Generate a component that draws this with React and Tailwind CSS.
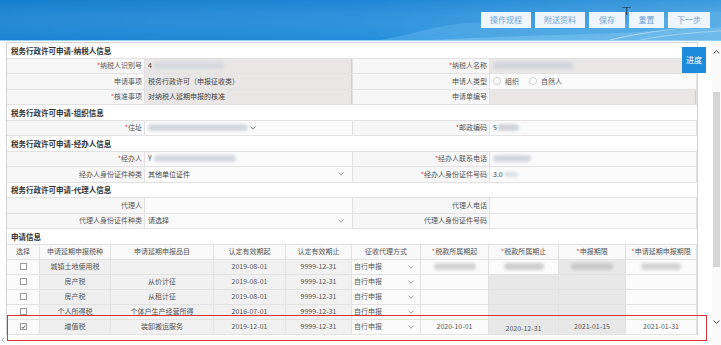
import React from "react";

function Chev({ className = "", color = "#888" }) {
  return (
    <svg width="6" height="4" viewBox="0 0 6 4" className={className}>
      <path d="M0.6 0.6L3 3.2L5.4 0.6" fill="none" stroke={color} strokeWidth="0.8" />
    </svg>
  );
}

function Blob({ w, h = 7, c = "bg-[#c9ced6]", ml = "" }) {
  return <span className={`inline-block rounded-full blur-[1.5px] ${c} ${ml}`} style={{ width: w, height: h }} />;
}

function Req() {
  return <span className="text-[#e23b3b]">*</span>;
}

function Label({ children, req, w }) {
  return (
    <div className={`${w} shrink-0 flex items-center justify-end pr-[2px] bg-[#f7f7f7] border-r border-[#e2e2e2] text-[#555]`}>
      {req && <Req />}
      {children}
    </div>
  );
}

function Val({ children, ro, w, between }) {
  return (
    <div
      className={`${w} flex items-center pl-[3px] pr-[8px] border-r border-[#e2e2e2] text-[#444] ${
        ro ? "bg-[#e9e6e6] shadow-[inset_-1px_0_0_#cfcfcf]" : "bg-[#fbfbfb]"
      } ${between ? "justify-between" : ""}`}
    >
      {children}
    </div>
  );
}

function FormRow({ l1, r1, v1, ro1, b1, l2, r2, v2, ro2, b2 }) {
  return (
    <div className="flex h-[15.5px] border-b border-[#e2e2e2]">
      <Label w="w-[138px]" req={r1}>{l1}</Label>
      <Val w="w-[208px]" ro={ro1} between={b1}>{v1}</Val>
      <Label w="w-[137px]" req={r2}>{l2}</Label>
      <Val w="flex-1" ro={ro2} between={b2}>{v2}</Val>
    </div>
  );
}

function Title({ children }) {
  return (
    <div className="h-[15.5px] flex items-center pl-[4px] font-bold text-[7.5px] text-[#333] border-b border-[#e2e2e2] bg-white">
      {children}
    </div>
  );
}

function Radio() {
  return <span className="inline-block w-[8px] h-[8px] rounded-full border border-[#cfcfcf] bg-white" />;
}

function Box({ checked }) {
  return (
    <span className="w-[7px] h-[7px] border border-[#9a9a9a] bg-white flex items-center justify-center">
      {checked && (
        <svg width="6" height="6" viewBox="0 0 6 6">
          <path d="M1 3.2L2.4 4.6L5 1.2" fill="none" stroke="#333" strokeWidth="1" />
        </svg>
      )}
    </span>
  );
}

const HEAD = ["选择", "申请延期申报税种", "申请延期申报品目", "认定有效期起", "认定有效期止", "征收代理方式", "税款所属期起", "税款所属期止", "申报期限", "申请延期申报期限"];

const ROWS = [
  { tz: "城镇土地使用税", pm: "", a: "2019-08-01", b: "9999-12-31", blur: true },
  { tz: "房产税", pm: "从价计征", a: "2019-08-01", b: "9999-12-31" },
  { tz: "房产税", pm: "从租计征", a: "2019-08-01", b: "9999-12-31" },
  { tz: "个人所得税", pm: "个体户生产经营所得", a: "2016-07-01", b: "9999-12-31" },
  { tz: "增值税", pm: "装卸搬运服务", a: "2019-12-01", b: "9999-12-31", checked: true, d: ["2020-10-01", "2020-12-31", "2021-01-15", "2021-01-31"] },
];

function Cell({ children, cls = "", bg = "bg-[#fbfbfb]" }) {
  return (
    <div className={`h-[15px] flex items-center justify-center border-r border-b border-[#e2e2e2] ${bg} ${cls}`}>{children}</div>
  );
}

export default function App() {
  return (
    <div className="w-[721px] h-[345px] overflow-hidden relative bg-white flex flex-col font-['Noto_Sans_CJK_SC',sans-serif] text-[7px] leading-none text-[#444]">
      {/* header banner */}
      <div className="h-[40px] shrink-0 relative bg-gradient-to-r from-[#1783d3] via-[#228ddb] to-[#4aa7e5] flex justify-end items-start pt-[12px] pr-[11px]">
        <svg className="absolute inset-0" width="721" height="40" viewBox="0 0 721 40">
          <defs>
            <linearGradient id="sky" x1="0" y1="0" x2="0" y2="1">
              <stop offset="0" stopColor="#0f6fbf" stopOpacity="0.25" />
              <stop offset="1" stopColor="#ffffff" stopOpacity="0" />
            </linearGradient>
          </defs>
          <rect width="721" height="40" fill="url(#sky)" />
          <path d="M380 40 C420 33 440 24 470 23 C505 22 530 30 570 29 C610 28 650 18 690 14 C705 12 715 12 721 12 L721 40 Z" fill="#5cb0e8" opacity="0.55" />
          <path d="M430 40 C500 36 560 35 620 33 C660 31 700 28 721 27 L721 40 Z" fill="#80c4ef" opacity="0.55" />
          <path d="M610 40 Q650 30 700 27" stroke="#ffffff" strokeOpacity="0.45" strokeWidth="1.2" fill="none" />
          <path d="M640 40 Q675 33 721 31" stroke="#ffffff" strokeOpacity="0.35" strokeWidth="1" fill="none" />
          <rect x="626" y="7" width="1.2" height="8" fill="#1d3550" opacity="0.8" />
          <rect x="622" y="7" width="9" height="1" fill="#1d3550" opacity="0.6" />
        </svg>
        <div className="relative flex gap-[4px] text-[8px] text-[#6ea4d6]">
          <button className="w-[50px] h-[16px] bg-[#eef5fc] flex items-center justify-center">操作规程</button>
          <button className="w-[50px] h-[16px] bg-[#eef5fc] flex items-center justify-center">附送资料</button>
          <button className="w-[36px] h-[16px] bg-[#eef5fc] flex items-center justify-center">保存</button>
          <button className="w-[35px] h-[16px] bg-[#eef5fc] flex items-center justify-center">重置</button>
          <button className="w-[42px] h-[16px] bg-[#eef5fc] flex items-center justify-center">下一步</button>
        </div>
      </div>
      <div className="h-[1px] shrink-0 bg-[#8fd0f2]" />

      <div className="flex flex-1 min-h-0">
        <div className="w-[712px] pt-[1px] pl-[6px]">
          <div className="w-[692px] border-l border-r border-t border-[#d4d4d4]">
            <Title>税务行政许可申请-纳税人信息</Title>
            <FormRow
              l1="纳税人识别号" r1 ro1 v1={<span className="flex items-center gap-[2px]">4<Blob w={70} c="bg-[#d6d9de]" /></span>}
              l2="纳税人名称" r2 ro2 v2={<Blob w={80} c="bg-[#d2d6dc]" />}
            />
            <FormRow
              l1="申请事项" ro1 v1="税务行政许可（申报征收类）"
              l2="申请人类型" v2={<span className="flex items-center gap-[4px] text-[#555]"><Radio /><span className="mr-[6px]">组织</span><Radio /><span>自然人</span></span>}
            />
            <FormRow l1="核准事项" r1 ro1 v1="对纳税人延期申报的核准" l2="申请单编号" ro2 v2="" />
            <Title>税务行政许可申请-组织信息</Title>
            <FormRow
              l1="住址" r1 v1={<span className="flex items-center gap-[2px]"><Blob w={100} c="bg-[#d4d8de]" /><Chev color="#666" /></span>}
              l2="邮政编码" r2 v2={<span className="flex items-center">5<Blob w={22} c="bg-[#d0d4da]" /></span>}
            />
            <Title>税务行政许可申请-经办人信息</Title>
            <FormRow
              l1="经办人" r1 v1={<span className="flex items-center gap-[2px]">Y<Blob w={82} c="bg-[#d4d8de]" /></span>}
              l2="经办人联系电话" r2 v2={<span className="flex items-center"><Blob w={38} c="bg-[#d2d6dc]" /></span>}
            />
            <FormRow
              l1="经办人身份证件种类" b1 v1={<><span>其他单位证件</span><Chev /></>}
              l2="经办人身份证件号码" r2 v2={<span className="flex items-center gap-[1px]">3.0<Blob w={14} h={5} c="bg-[#dde0e4]" /></span>}
            />
            <Title>税务行政许可申请-代理人信息</Title>
            <FormRow l1="代理人" v1="" l2="代理人电话" v2="" />
            <FormRow l1="代理人身份证件种类" b1 v1={<><span>请选择</span><Chev /></>} l2="代理人身份证件号码" v2="" />
            <Title>申请信息</Title>

            <div className="grid grid-cols-[33px_71px_103px_72px_66px_69px_68px_70px_67px_71px] text-[#555]">
              {HEAD.map((h, i) => (
                <Cell key={h} bg="bg-[#f9f9f9]">
                  {i >= 6 && <Req />}
                  {h}
                </Cell>
              ))}
              {ROWS.map((r, ri) => (
                <React.Fragment key={ri}>
                  <Cell><Box checked={r.checked} /></Cell>
                  <Cell bg="bg-[#efefef]">{r.tz}</Cell>
                  <Cell bg="bg-[#f1f1f1]">{r.pm}</Cell>
                  <Cell bg="bg-[#f1f1f1]">{r.a}</Cell>
                  <Cell bg="bg-[#f1f1f1]">{r.b}</Cell>
                  <Cell cls="!justify-between pl-[2px] pr-[6px]"><span>自行申报</span><Chev /></Cell>
                  <Cell>{r.blur ? <Blob w={42} c="bg-[#d3d3d3]" /> : r.d ? r.d[0] : ""}</Cell>
                  <Cell bg={r.blur ? "bg-[#fbfbfb]" : "bg-[#e8e8e8]"}>{r.blur ? <Blob w={40} c="bg-[#cfcfcf]" /> : r.d ? <span className="pt-[3px]">{r.d[1]}</span> : ""}</Cell>
                  <Cell bg="bg-[#e8e8e8]">{r.blur ? <Blob w={42} c="bg-[#c9c9c9]" /> : r.d ? r.d[2] : ""}</Cell>
                  <Cell>{r.blur ? <Blob w={40} c="bg-[#d5d5d5]" /> : r.d ? r.d[3] : ""}</Cell>
                </React.Fragment>
              ))}
            </div>
          </div>
        </div>

        {/* vertical scrollbar */}
        <div className="w-[9px] flex flex-col items-center bg-[#fafafa]">
          <svg width="7" height="4" viewBox="0 0 7 4" className="mt-[9px]">
            <path d="M0.6 3.4L3.5 0.6L6.4 3.4" fill="none" stroke="#333" strokeWidth="0.9" />
          </svg>
          <div className="mt-[38px] w-[7px] h-[175px] bg-[#d6d6d6]" />
          <svg width="7" height="4" viewBox="0 0 7 4" className="mt-[53px]">
            <path d="M0.6 0.6L3.5 3.4L6.4 0.6" fill="none" stroke="#333" strokeWidth="0.9" />
          </svg>
        </div>
      </div>

      {/* floating progress button */}
      <div className="absolute left-[682px] top-[47px] w-[24px] h-[26px] bg-[#1c8bd9] text-white text-[8px] flex items-center justify-center">
        进度
      </div>

      {/* red annotation box */}
      <div className="absolute left-[7px] top-[315px] w-[700px] h-[26px] border-[1.5px] border-[#d9343c]" />

      {/* horizontal scrollbar arrow */}
      <svg width="4" height="6" viewBox="0 0 4 6" className="absolute left-[1px] top-[337px]">
        <path d="M3.4 0.6L0.8 3L3.4 5.4" fill="none" stroke="#999" strokeWidth="0.8" />
      </svg>
    </div>
  );
}
